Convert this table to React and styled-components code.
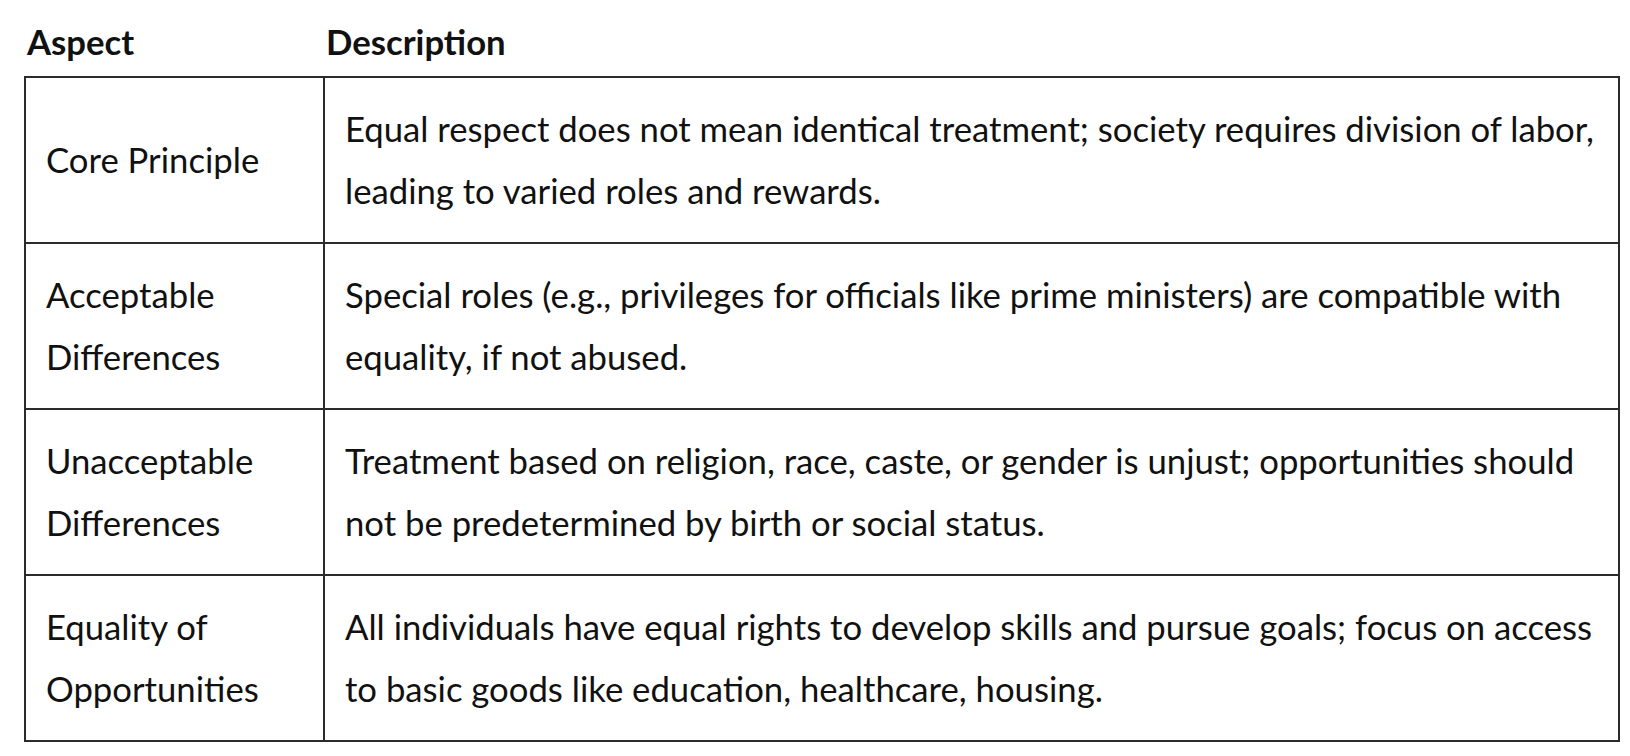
import styled, { createGlobalStyle } from "styled-components";

const GlobalStyle = createGlobalStyle`
  body {
    margin: 0;
    background: #fff;
    font-family: Lato, "Noto Sans", sans-serif;
    color: #111;
  }
`;

const Wrapper = styled.div`
  padding: 0 10px 0 24px;
`;

const Table = styled.table`
  border-collapse: collapse;
  table-layout: fixed;
  width: 1596px;
  font-size: 34.7px;
  line-height: 62px;
`;

const HeadCell = styled.th`
  text-align: left;
  font-weight: 700;
  padding: 11px 2px 3px;
  vertical-align: bottom;
`;

const Cell = styled.td`
  border: 2px solid #2b2b2b;
  padding: 20px 20px 20px 20px;
  vertical-align: middle;
  font-weight: 400;
`;

const rows = [
  {
    aspect: "Core Principle",
    desc: "Equal respect does not mean identical treatment; society requires division of labor, leading to varied roles and rewards.",
  },
  {
    aspect: "Acceptable Differences",
    desc: "Special roles (e.g., privileges for officials like prime ministers) are compatible with equality, if not abused.",
  },
  {
    aspect: "Unacceptable Differences",
    desc: "Treatment based on religion, race, caste, or gender is unjust; opportunities should not be predetermined by birth or social status.",
  },
  {
    aspect: "Equality of Opportunities",
    desc: "All individuals have equal rights to develop skills and pursue goals; focus on access to basic goods like education, healthcare, housing.",
  },
];

const App = () => {
  return (
    <Wrapper>
      <GlobalStyle />
      <Table>
        <colgroup>
          <col style={{ width: "299px" }} />
          <col />
        </colgroup>
        <thead>
          <tr>
            <HeadCell>Aspect</HeadCell>
            <HeadCell>Description</HeadCell>
          </tr>
        </thead>
        <tbody>
          {rows.map((r) => (
            <tr key={r.aspect}>
              <Cell>{r.aspect}</Cell>
              <Cell>{r.desc}</Cell>
            </tr>
          ))}
        </tbody>
      </Table>
    </Wrapper>
  );
};

export default App;
